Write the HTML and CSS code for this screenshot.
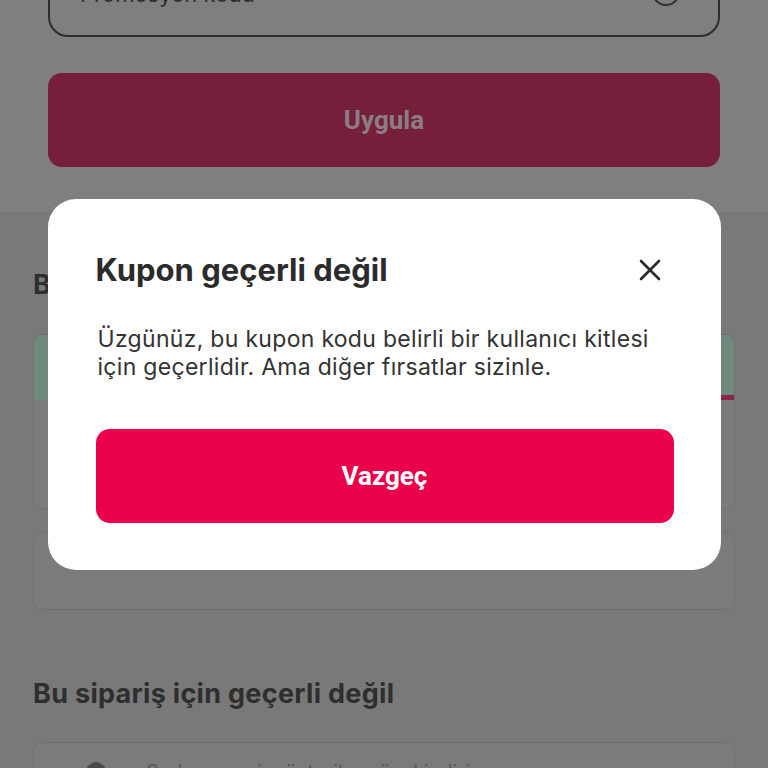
FILE: index.html
```html
<!DOCTYPE html>
<html lang="tr">
<head>
<meta charset="utf-8">
<title>Kupon</title>
<link rel="stylesheet" href="styles.css">
</head>
<body>
<div class="page">
  <section class="top-section">
    <div class="code-input">
      <span class="placeholder">Promosyon kodu</span>
      <span class="input-icon"></span>
    </div>
    <button class="apply-btn">Uygula</button>
  </section>
  <section class="list-section">
    <h2 class="section-title">Bu sipariş için geçerli</h2>
    <div class="card card-large">
      <div class="card-head"></div>
      <div class="card-progress"><div class="card-progress-fill"></div></div>
    </div>
    <div class="card card-small"></div>
    <h2 class="section-title title-2">Bu sipariş için geçerli değil</h2>
    <div class="card card-bottom">
      <div class="card-row">
        <span class="radio"></span>
        <span class="row-text">Sadece yeni müşterilere özel indirim</span>
      </div>
    </div>
  </section>
</div>

<div class="backdrop">
  <div class="modal" role="dialog">
    <div class="modal-head">
      <h1 class="modal-title">Kupon geçerli değil</h1>
      <button class="close-btn" aria-label="Kapat">
        <svg width="22" height="22" viewBox="0 0 22 22"><path d="M2 2 L20 20 M20 2 L2 20" stroke="#2b2b2b" stroke-width="2.6" stroke-linecap="round" fill="none"/></svg>
      </button>
    </div>
    <p class="modal-text">Üzgünüz, bu kupon kodu belirli bir kullanıcı kitlesi için geçerlidir. Ama diğer fırsatlar sizinle.</p>
    <button class="cancel-btn">Vazgeç</button>
  </div>
</div>
</body>
</html>
```
FILE: styles.css
```css
html, body {
  margin: 0;
  padding: 0;
  height: 100%;
  overflow: hidden;
}
body {
  background: #7f7f7f;
  font-family: Inter, "Noto Sans", Roboto, sans-serif;
}
.page {
  display: flex;
  flex-direction: column;
}
.top-section {
  background: #7f7f7f;
  padding: 0 48px 45px 48px;
  display: flex;
  flex-direction: column;
}
.code-input {
  margin-top: -53px;
  height: 86px;
  border: 2px solid #2c2c2c;
  border-radius: 20px;
  display: flex;
  align-items: center;
  justify-content: space-between;
  padding: 0 38px 0 30px;
}
.placeholder {
  font-size: 22px;
  color: #2e2e2e;
  margin-top: 4px;
}
.input-icon {
  width: 24px;
  height: 24px;
  border: 2px solid #333;
  border-radius: 50%;
}
.apply-btn {
  margin-top: 36px;
  height: 94px;
  border: none;
  border-radius: 14px;
  background: #761f3b;
  color: #8c7c83;
  font-family: Roboto, sans-serif;
  font-weight: 700;
  font-size: 26px;
}
.list-section {
  background: #797979;
  padding: 57px 33px 0 33px;
  display: flex;
  flex-direction: column;
}
.section-title {
  margin: 0;
  font-size: 27px;
  line-height: 32px;
  font-weight: 700;
  color: #2e2e2e;
  letter-spacing: 0.3px;
}
.card {
  border: 1px solid #717171;
  border-radius: 10px;
  background: #7b7b7b;
  overflow: hidden;
}
.card-large {
  margin-top: 33px;
  height: 173px;
  display: flex;
  flex-direction: column;
}
.card-head {
  height: 60px;
  background: #6f897c;
}
.card-progress {
  height: 5px;
  background: #6f897c;
}
.card-progress-fill {
  height: 100%;
  margin-left: 55%;
  background: #8a2645;
}
.card-small {
  margin-top: 23px;
  height: 76px;
}
.title-2 {
  margin-top: 68px;
}
.card-bottom {
  margin-top: 32px;
  height: 120px;
}
.card-row {
  display: flex;
  align-items: center;
  gap: 40px;
  padding: 17px 52px;
}
.radio {
  width: 20px;
  height: 20px;
  border-radius: 50%;
  background: #4a4a4a;
}
.row-text {
  font-size: 20px;
  color: #5a5a5a;
}
.backdrop {
  position: fixed;
  inset: 0;
  display: flex;
  align-items: center;
  justify-content: center;
}
.modal {
  width: 673px;
  height: 371px;
  box-sizing: border-box;
  background: #fff;
  border-radius: 28px;
  padding: 52px 47px 47px 48px;
  display: flex;
  flex-direction: column;
}
.modal-head {
  display: flex;
  align-items: center;
  justify-content: space-between;
  height: 38px;
}
.modal-title {
  margin: 0;
  font-size: 31px;
  font-weight: 700;
  color: #2b2b2b;
  letter-spacing: 0;
}
.close-btn {
  background: none;
  border: none;
  padding: 0;
  margin-right: 13px;
  width: 22px;
  height: 22px;
  display: flex;
}
.modal-text {
  margin: 36px 0 0 2px;
  font-size: 23px;
  line-height: 28px;
  color: #333;
  letter-spacing: 0.3px;
}
.cancel-btn {
  margin-top: auto;
  height: 94px;
  border: none;
  border-radius: 14px;
  background: #ea004b;
  color: #fff;
  font-family: Roboto, sans-serif;
  font-weight: 700;
  font-size: 26px;
}
```
